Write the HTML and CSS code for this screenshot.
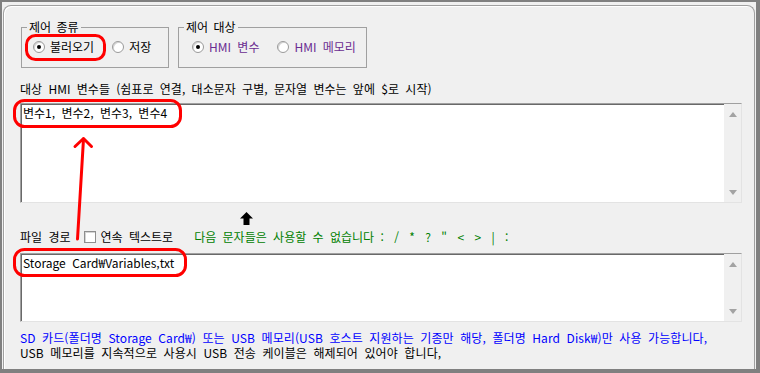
FILE: index.html
```html
<!DOCTYPE html>
<html lang="ko">
<head>
    <meta charset="utf-8">
    <link rel="stylesheet" href="styles.css">
</head>
<body>
    <!-- Dialog window with one tab page -->
    <div class="window">
        <div class="tab-page">
            <div class="group-row">
                <fieldset class="group group-kind">
                    <legend>제어 종류</legend>
                    <div class="radio-row">
                        <label class="radio-item"><span class="radio checked"></span>불러오기</label>
                        <label class="radio-item"><span class="radio"></span>저장</label>
                    </div>
                </fieldset>
                <fieldset class="group group-target">
                    <legend>제어 대상</legend>
                    <div class="radio-row">
                        <label class="radio-item purple"><span class="radio checked"></span>HMI 변수</label>
                        <label class="radio-item purple"><span class="radio"></span>HMI 메모리</label>
                    </div>
                </fieldset>
            </div>

            <div class="field-label">대상 HMI 변수들 (쉼표로 연결, 대소문자 구별, 문자열 변수는 앞에 $로 시작)</div>
            <div class="textbox tb-vars">
                <div class="tb-text">변수1, 변수2, 변수3, 변수4</div>
                <div class="vscroll"><span class="arr-up"></span><span class="arr-down"></span></div>
            </div>

            <div class="hint-arrow">
                <svg width="13" height="13" viewBox="0 0 13 13"><path d="M6.5 0 L13 6.5 L9.5 6.5 L9.5 13 L3.5 13 L3.5 6.5 L0 6.5 Z" fill="#000"/></svg>
            </div>

            <div class="path-row">
                <span>파일 경로</span>
                <label class="check-item"><span class="checkbox"></span>연속 텍스트로</label>
                <span class="warn">다음 문자들은 사용할 수 없습니다 <span class="symbols">: / * ? " &lt; &gt; | :</span></span>
            </div>
            <div class="textbox tb-path">
                <div class="tb-text">Storage Card₩Variables,txt</div>
                <div class="vscroll"><span class="arr-up"></span><span class="arr-down"></span></div>
            </div>

            <div class="note blue">SD 카드(폴더명 Storage Card₩) 또는 USB 메모리(USB 호스트 지원하는 기종만 해당, 폴더명 Hard Disk₩)만 사용 가능합니다,</div>
            <div class="note">USB 메모리를 지속적으로 사용시 USB 전송 케이블은 해제되어 있어야 합니다,</div>
        </div>

        <!-- Red annotation marks drawn over the dialog -->
        <svg class="marks" width="760" height="373" viewBox="0 0 760 373">
            <rect x="26.5" y="35.5" width="78" height="24" rx="9" />
            <rect x="14.5" y="100.5" width="166" height="26" rx="10" />
            <rect x="14.5" y="249.5" width="171" height="26" rx="10" />
            <line x1="83.5" y1="139" x2="77.5" y2="239" />
            <polyline points="75,146.5 83.5,138.5 91.5,146.5" />
        </svg>
    </div>
</body>
</html>
```

FILE: styles.css
```css
/* Base */
* {
    box-sizing: border-box;
}

body {
    margin: 0;
    font-family: "Noto Sans CJK KR", "Noto Sans", sans-serif;
    font-size: 12px;
    line-height: 16px;
    word-spacing: 3px;
    color: #000;
    background: #808080;
}

/* Window frame */
.window {
    position: relative;
    width: 760px;
    height: 373px;
    background: #f0f0f0;
    border-style: solid;
    border-color: #808080;
    border-width: 2px 4px 4px 2px;
}

.tab-page {
    height: 364px;
    margin: 3px 1px 0 1px;
    border: 1px solid #a0a0a0;
    border-bottom: none;
    border-radius: 8px 8px 0 0;
    box-shadow: inset 1px 1px 0 #ffffff;
    padding: 13px 12px 0 16px;
}

/* Group boxes */
.group-row {
    display: flex;
    gap: 9px;
    margin-left: 1px;
}

.group {
    margin: 0;
    padding: 5px 0 13px 0;
    border: 1px solid #a0a0a0;
    min-width: 0;
}

.group legend {
    padding: 0 2px;
    margin-left: 5px;
    line-height: 16px;
    word-spacing: 2px;
}

.group-kind {
    width: 148px;
}

.group-target {
    width: 189px;
}

.group-kind .radio-row {
    padding-left: 11px;
}

.group-target .radio-row {
    padding-left: 13px;
}

.radio-row {
    display: flex;
    gap: 18px;
    height: 14px;
    align-items: center;
}

.radio-item {
    display: flex;
    align-items: center;
    gap: 5px;
}

.purple {
    color: #6b2c91;
}

.radio {
    position: relative;
    display: inline-block;
    width: 12px;
    height: 12px;
    border-radius: 50%;
    background: #fff;
    border: 1px solid #9a9a9a;
    box-shadow: inset 1px 1px 0 #d4d4d4;
}

.radio.checked::after {
    content: "";
    position: absolute;
    left: 3px;
    top: 3px;
    width: 4px;
    height: 4px;
    border-radius: 50%;
    background: #000;
}

/* Labels and text boxes */
.field-label {
    margin-top: 13px;
}

.textbox {
    display: flex;
    background: #fff;
    border: 1px solid;
    border-color: #a0a0a0 #e3e3e3 #e3e3e3 #a0a0a0;
    box-shadow: inset 1px 1px 0 #696969;
}

.tb-vars {
    height: 100px;
    margin-top: 6px;
}

.tb-path {
    height: 69px;
    margin-top: 8px;
}

.tb-text {
    flex: 1;
    padding: 2px 2px;
    line-height: 14px;
}

.vscroll {
    width: 17px;
    background: #f0f0f0;
    display: flex;
    flex-direction: column;
    justify-content: space-between;
    align-items: center;
    padding: 8px 0 7px 0;
}

.arr-up {
    width: 0;
    height: 0;
    border-left: 4px solid transparent;
    border-right: 4px solid transparent;
    border-bottom: 5px solid #a3a3a3;
}

.arr-down {
    width: 0;
    height: 0;
    border-left: 4px solid transparent;
    border-right: 4px solid transparent;
    border-top: 5px solid #a3a3a3;
}

.hint-arrow {
    height: 13px;
    margin-top: 9px;
    padding-left: 220px;
}

.hint-arrow svg {
    display: block;
}

/* File path row */
.path-row {
    display: flex;
    align-items: center;
    margin-top: 4px;
    height: 16px;
}

.check-item {
    display: flex;
    align-items: center;
    gap: 5px;
    margin-left: 13px;
}

.checkbox {
    display: inline-block;
    width: 12px;
    height: 12px;
    background: #fff;
    border: 1px solid #8e8e8e;
    box-shadow: inset 1px 1px 0 #d4d4d4;
}

.warn {
    color: #008000;
    margin-left: 21px;
}

.symbols {
    word-spacing: 7px;
}

/* Notes at bottom */
.note {
    line-height: 15px;
    letter-spacing: 0.1px;
}

.tb-path + .note {
    margin-top: 8px;
}

.blue {
    color: #0000ff;
}

/* Annotation overlay */
.marks {
    position: absolute;
    left: -2px;
    top: -2px;
    pointer-events: none;
    fill: none;
    stroke: #ff0000;
    stroke-width: 3;
    stroke-linecap: round;
    stroke-linejoin: round;
}
```
